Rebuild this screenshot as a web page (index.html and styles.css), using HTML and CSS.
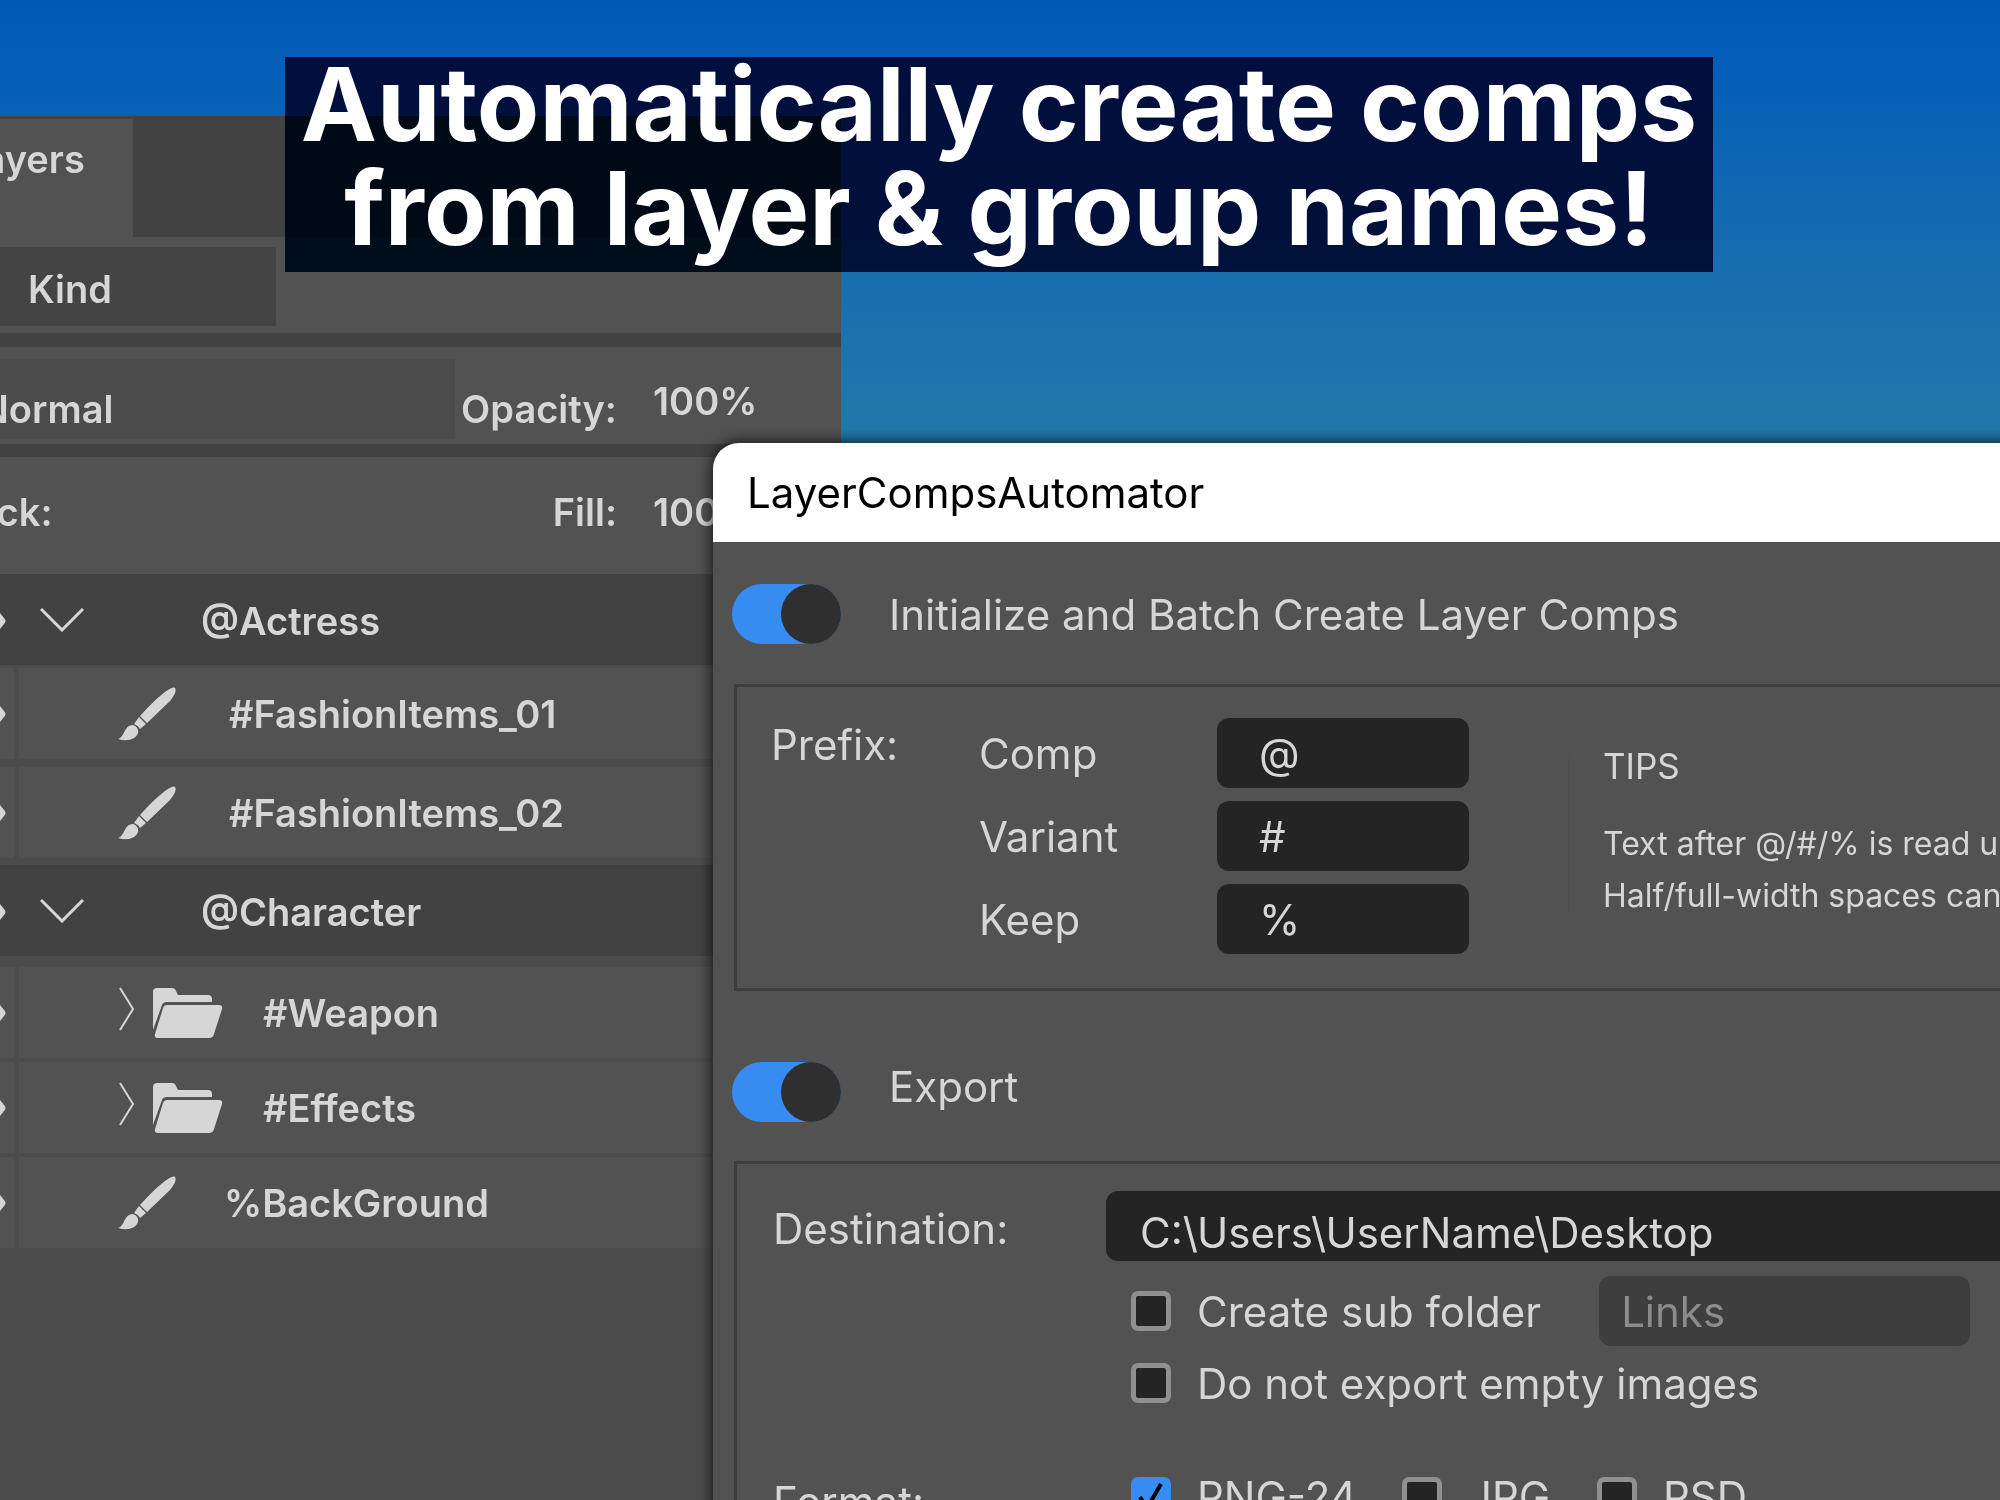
FILE: index.html
```html
<!DOCTYPE html>
<html lang="en">
<head>
<meta charset="utf-8">
<title>LayerCompsAutomator</title>
<link rel="stylesheet" href="styles.css">
</head>
<body>
<svg class="symbols" aria-hidden="true">
  <symbol id="eye" viewBox="0 0 60 36"><path d="M2 18Q14 2 30 2Q44 2 54 10L58 15Q61 18 58 21L54 26Q44 34 30 34Q14 34 2 18Z"/></symbol>
  <symbol id="down" viewBox="0 0 44 24"><path d="M1 1L22 22L43 1" fill="none" stroke="currentColor" stroke-width="3"/></symbol>
  <symbol id="right" viewBox="0 0 16 44"><path d="M1 1L14 22L1 43" fill="none" stroke="currentColor" stroke-width="2"/></symbol>
  <symbol id="brush" viewBox="0 0 58 54"><path d="M57 1C59 4 56 9 52 14L29 36L22 29C32 18 42 8 50 3C53 1 56 0 57 1Z"/><path d="M21 30L28 37L22 42C21 40 19 38 16 37Z"/><path d="M15 38C19 39 21 43 20 46C18 52 10 55 0 52C5 50 5 46 8 42C10 39 12 38 15 38Z"/></symbol>
  <symbol id="folder" viewBox="0 0 70 50"><path d="M0 42V4Q0 0 4 0H19Q22 0 23 3L25 7H55Q59 7 59 11V14H14Q10 14 9 17Z"/><path d="M14 17H66Q70 17 69 21L61 46Q60 50 56 50H5Q1 50 2 46L10 20Q11 17 14 17Z"/></symbol>
</svg>
<main class="stage">
  <section class="panel" aria-label="Layers">
    <div class="tabs"><button class="tab" type="button">Layers</button></div>
    <div class="bar filter"><button class="drop kind" type="button">Kind</button></div>
    <div class="bar blend">
      <button class="drop mode" type="button">Normal</button>
      <span class="caption">Opacity:</span><span class="amount raised">100%</span>
    </div>
    <div class="bar lock">
      <span class="lock-name">Lock:</span>
      <span class="caption">Fill:</span><span class="amount">100%</span>
    </div>
    <ul class="layers">
      <li class="row group"><svg class="eye"><use href="#eye"/></svg><svg class="down"><use href="#down"/></svg><span class="name">@Actress</span></li>
      <li class="row"><span class="cell"><svg class="eye"><use href="#eye"/></svg></span><span class="item"><svg class="brush"><use href="#brush"/></svg><span>#FashionItems_01</span></span></li>
      <li class="row"><span class="cell"><svg class="eye"><use href="#eye"/></svg></span><span class="item"><svg class="brush"><use href="#brush"/></svg><span>#FashionItems_02</span></span></li>
      <li class="row group"><svg class="eye"><use href="#eye"/></svg><svg class="down"><use href="#down"/></svg><span class="name">@Character</span></li>
      <li class="row"><span class="cell"><svg class="eye"><use href="#eye"/></svg></span><span class="item"><svg class="right"><use href="#right"/></svg><svg class="folder"><use href="#folder"/></svg><span>#Weapon</span></span></li>
      <li class="row"><span class="cell"><svg class="eye"><use href="#eye"/></svg></span><span class="item"><svg class="right"><use href="#right"/></svg><svg class="folder"><use href="#folder"/></svg><span>#Effects</span></span></li>
      <li class="row"><span class="cell"><svg class="eye"><use href="#eye"/></svg></span><span class="item keep"><svg class="brush"><use href="#brush"/></svg><span>%BackGround</span></span></li>
    </ul>
  </section>

  <section class="dialog" aria-labelledby="title">
    <h2 class="title" id="title">LayerCompsAutomator</h2>
    <form class="content">
      <label class="switch-row"><input class="switch" type="checkbox" role="switch" checked><span>Initialize and Batch Create Layer Comps</span></label>
      <div class="box prefix">
        <span class="heading">Prefix:</span>
        <div class="fields">
          <label for="comp">Comp</label><input class="field" id="comp" value="@">
          <label for="variant">Variant</label><input class="field" id="variant" value="#">
          <label for="keep">Keep</label><input class="field" id="keep" value="%">
        </div>
        <div class="rule"></div>
        <div class="tips">
          <h3>TIPS</h3>
          <p>Text after @/#/% is read u</p>
          <p>Half/full-width spaces can</p>
        </div>
      </div>
      <label class="switch-row high"><input class="switch" type="checkbox" role="switch" checked><span>Export</span></label>
      <div class="box export">
        <label class="heading" for="dest">Destination:</label>
        <input class="field dest" id="dest" value="C:\Users\UserName\Desktop">
        <div class="options">
          <div class="option"><label class="check"><input type="checkbox"><span>Create sub folder</span></label><input class="field sub" aria-label="Sub folder name" placeholder="Links" disabled></div>
          <div class="option"><label class="check"><input type="checkbox"><span>Do not export empty images</span></label></div>
        </div>
        <span class="heading format">Format:</span>
        <div class="formats">
          <label class="check png"><input type="checkbox" checked><span>PNG-24</span></label>
          <label class="check jpg"><input type="checkbox"><span>JPG</span></label>
          <label class="check psd"><input type="checkbox"><span>PSD</span></label>
        </div>
      </div>
    </form>
  </section>

  <div class="banner-shade"></div>
  <h1 class="banner">Automatically create comps<br>from layer &amp; group names!</h1>
</main>
</body>
</html>
```
FILE: styles.css
```css
* { box-sizing: border-box; }
body { margin: 0; font-family: Inter, "Liberation Sans", sans-serif; color: #d6d6d6; }
button, input { font: inherit; color: inherit; border: 0; margin: 0; }
h1, h2, h3, p, ul { margin: 0; padding: 0; list-style: none; }
h2, h3 { font-weight: 400; }
svg { fill: currentColor; flex: none; display: block; }
.symbols { position: absolute; width: 0; height: 0; }

.stage {
  position: relative;
  isolation: isolate;
  height: 100vh;
  overflow: hidden;
  padding-top: 116px;
  background: linear-gradient(#0059b8, #0760b7 100px, #1169b1 200px, #196fae 290px, #2079ab 430px, #2f8aa5);
  white-space: nowrap;
}

/* layers panel, its left part lies outside the window */
.panel {
  width: 901px;
  height: 100%;
  margin-left: -60px;
  background: #4c4c4c;
  font-size: 38px;
  font-weight: 600;
}
.tabs { height: 121px; padding-top: 3px; background: #424242; }
.tab { width: 193px; height: 118px; padding: 0 0 38px 22px; text-align: left; background: #525252; }
.bar { display: flex; background: #525252; }
.filter { height: 96px; padding: 10px 0 7px; }
.drop { text-align: left; background: #4c4c4c; }
.kind { width: 336px; padding: 4px 0 0 88px; background: #444; }
.blend { height: 111px; border-top: 14px solid #424242; padding: 12px 0 5px; align-items: center; }
.mode { width: 515px; height: 80px; padding: 20px 0 0 40px; }
.blend .caption { padding-top: 20px; }
.caption { width: 162px; text-align: right; }
.amount { padding-left: 36px; }
.raised { padding-top: 4px; }
.lock { height: 130px; border-top: 13px solid #424242; padding-bottom: 8px; align-items: center; }
.lock-name { width: 515px; padding-left: 12px; }

.row { display: flex; align-items: center; height: 91px; margin-bottom: 8px; }
.row:nth-child(1) { margin-bottom: 3px; }
.row:nth-child(3) { margin-bottom: 7px; }
.row:nth-child(4) { margin-bottom: 11px; }
.row:nth-child(5), .row:nth-child(6) { margin-bottom: 4px; }
.group { background: #424242; padding-top: 3px; }
.eye { width: 60px; height: 36px; margin-left: 6px; }
.cell { width: 74px; height: 100%; display: flex; align-items: center; background: #525252; margin-right: 5px; }
.item { flex: 1; height: 100%; display: flex; align-items: center; background: #525252; padding-left: 99px; }
.down { width: 44px; height: 24px; margin: 0 117px 3px 34px; }
.brush { width: 58px; height: 54px; margin-right: 53px; }
.keep .brush { margin-right: 48px; }
.right { width: 16px; height: 44px; margin: 0 18px 8px 1px; }
.folder { width: 70px; height: 50px; margin-right: 40px; }

/* plug-in window */
.dialog {
  position: absolute;
  left: 713px;
  right: -200px;
  top: 443px;
  bottom: -200px;
  background: #525252;
  border-radius: 26px;
  box-shadow: 0 0 14px 2px rgb(0 0 0 / 70%);
  font-size: 42px;
  overflow: hidden;
}
.title { height: 99px; line-height: 99px; padding-left: 34px; font-size: 42px; color: #000; background: #fff; }
.content { padding: 42px 0 0 19px; }
.switch-row { display: flex; gap: 48px; height: 60px; line-height: 61px; }
.high { line-height: 49px; }
.switch { appearance: none; width: 109px; height: 60px; border-radius: 30px; background: #368cf0; }
.switch::before { content: ""; display: block; width: 60px; height: 60px; margin-left: 49px; border-radius: 50%; background: #2f2f2f; }
.box { margin-left: 2px; border: 3px solid #3e3e3e; }
.prefix { display: flex; height: 307px; margin-top: 40px; margin-bottom: 71px; padding: 31px 0 0 34px; }
.heading { line-height: 54px; width: 208px; }
.fields { display: grid; grid-template-columns: 238px 252px; grid-auto-rows: 70px; row-gap: 13px; align-items: center; }
.field { width: 100%; height: 70px; padding: 0 0 0 42px; border-radius: 12px; background: #242424; }
.rule { width: 1px; height: 157px; margin: 39px 34px 0 99px; background: #4d4d4d; }
.tips { padding-top: 22px; font-size: 32px; line-height: 52px; }
.tips h3 { font-size: 35px; margin-bottom: 26px; }

.export { display: grid; grid-template-columns: 333px 1fr; margin-top: 39px; height: 900px; padding: 27px 0 0 36px; align-content: start; }
.export .heading { line-height: 76px; }
.dest { padding: 12px 0 0 34px; }
.options { grid-column: 2; padding: 8px 0 0 25px; }
.option { display: flex; align-items: center; height: 72px; }
.check { display: flex; align-items: center; gap: 26px; }
.check input { appearance: none; width: 40px; height: 40px; border: 5px solid #909090; border-radius: 7px; background: #242424; }
.check input:checked { border: 0; background: #368cf0 url("data:image/svg+xml,%3Csvg xmlns='http://www.w3.org/2000/svg' viewBox='0 0 40 40'%3E%3Cpath d='M9 20L16 31L30 7' fill='none' stroke='%23000' stroke-width='4'/%3E%3C/svg%3E"); }
.sub { width: 371px; margin-left: 58px; padding-left: 22px; background: #3e3e3e; }
.sub::placeholder { color: #8c8c8c; opacity: 1; }
.export .format { margin-top: 45px; }
.formats { display: flex; align-items: flex-start; padding: 52px 0 0 25px; }
.png { width: 271px; }
.jpg { width: 195px; }

.banner, .banner-shade { position: absolute; top: 57px; left: 285px; right: 287px; height: 215px; }
.banner-shade { background: #002654; mix-blend-mode: multiply; }
.banner { top: 52px; color: #fff; font-size: 102px; font-weight: 700; line-height: 104px; text-align: center; }
```
